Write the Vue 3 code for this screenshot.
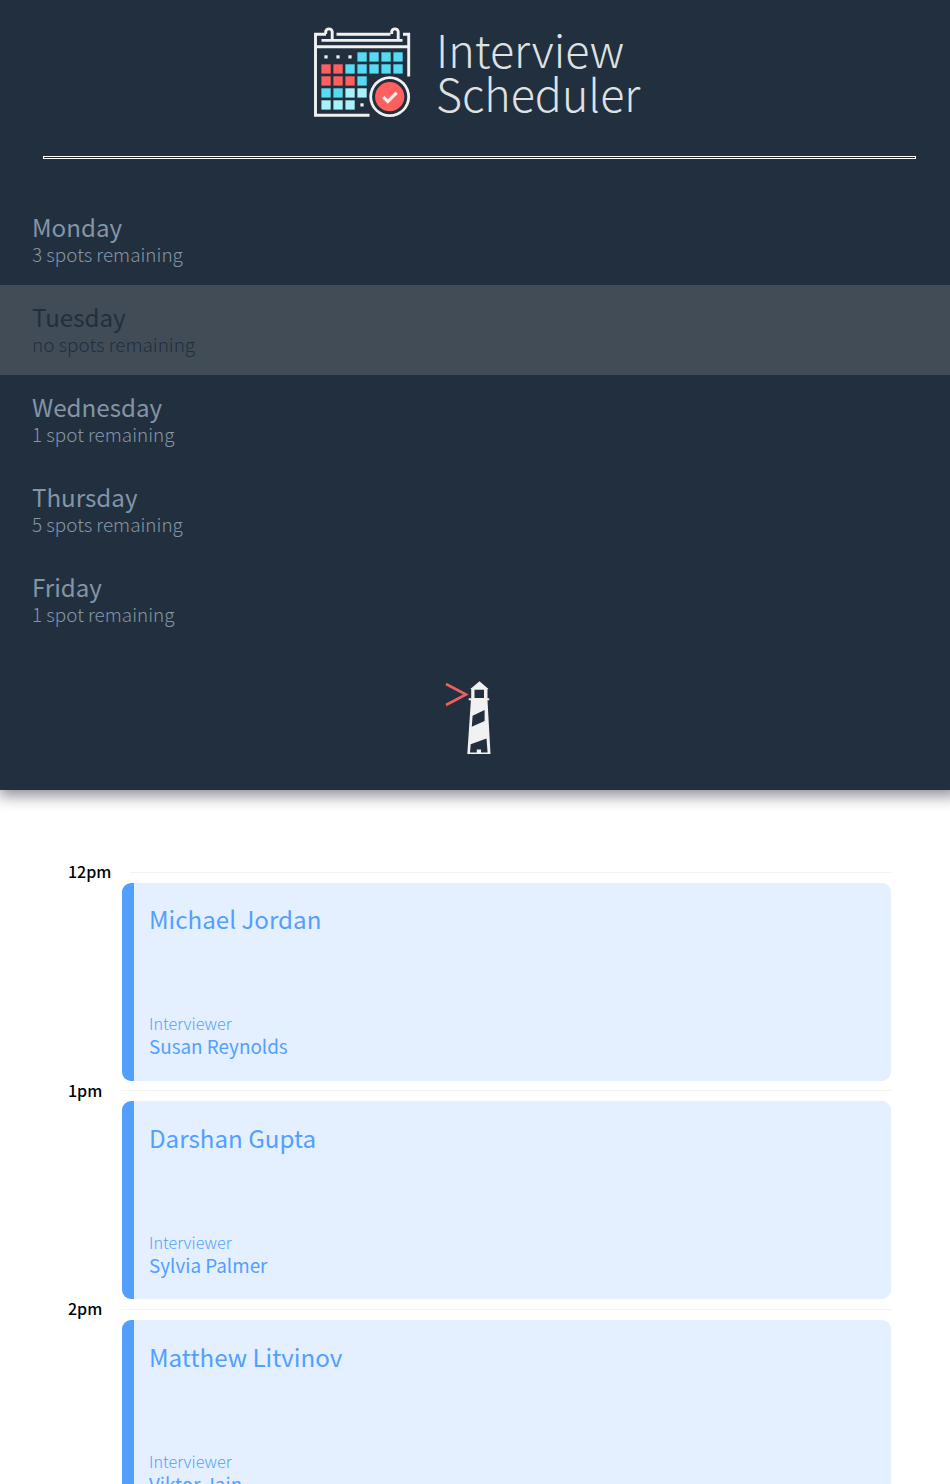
<script setup>
const days = [
  { name: 'Monday', spots: '3 spots remaining' },
  { name: 'Tuesday', spots: 'no spots remaining', full: true },
  { name: 'Wednesday', spots: '1 spot remaining' },
  { name: 'Thursday', spots: '5 spots remaining' },
  { name: 'Friday', spots: '1 spot remaining' }
]
const appointments = [
  { time: '12pm', student: 'Michael Jordan', interviewer: 'Susan Reynolds' },
  { time: '1pm', student: 'Darshan Gupta', interviewer: 'Sylvia Palmer' },
  { time: '2pm', student: 'Matthew Litvinov', interviewer: 'Viktor Jain' }
]
const rows = [
  '...bbbb',
  'rrbbbbb',
  'rrrb',
  'bbll',
  'lll.'
]
const colors = { b: '#57dbf2', r: '#ff5f5f', l: '#a9f1fa' }
const cells = rows.flatMap((row, y) =>
  [...row].map((kind, x) => ({ kind, x: 21.4 + x * 12, y: 37.3 + y * 12 }))
)
</script>

<template>
  <main class="layout">
    <section class="sidebar">
      <header class="brand">
        <svg class="calendar" width="98" height="92" viewBox="13 12 98 92">
          <g fill="none" stroke="#f1f1f1" stroke-width="2.9">
            <path d="M26 19.3H15.5V100.3H69.5" />
            <path d="M36.5 19.3H90.5" />
            <path d="M103 19.3H108.7V61.5" />
            <path d="M15.5 31.7H108.7" />
            <path d="M21.5 25.4H102.5" />
            <path d="M32.2 25V16.6A3.3 3.3 0 0 0 25.7 16.6V19" />
            <path d="M98.2 25V16.6A3.3 3.3 0 0 0 91.7 16.6V19" />
          </g>
          <template v-for="(cell, i) in cells" :key="i">
            <rect v-if="cell.kind === '.'" :x="cell.x + 3" :y="cell.y + 3" width="3.2" height="3.2" fill="#f1f1f1" />
            <rect v-else :x="cell.x" :y="cell.y" width="9.3" height="9.3" :fill="colors[cell.kind]" />
          </template>
          <circle cx="89.7" cy="81.7" r="20.4" fill="#f1f1f1" />
          <circle cx="89.7" cy="81.7" r="17.6" fill="#222f3e" />
          <circle cx="89.7" cy="81.7" r="14.6" fill="#ff5f5f" />
          <path d="M83.2 81.9L87.8 86.6L96.7 77.7" fill="none" stroke="#f5eeee" stroke-width="3.1" />
        </svg>
        <h1 class="title"><span>Interview</span><span>Scheduler</span></h1>
      </header>
      <hr class="separator">
      <nav>
        <ul class="days">
          <li v-for="day in days" :key="day.name" class="day" :class="{ full: day.full }">
            <h2>{{ day.name }}</h2>
            <h3>{{ day.spots }}</h3>
          </li>
        </ul>
      </nav>
      <svg class="lighthouse" width="48" height="76" viewBox="15 11 48 76">
        <path d="M16 14L36 24.5L16 35" fill="none" stroke="#ef5f5f" stroke-width="2.6" />
        <path d="M49.5 11.3L58.5 18.9H40.3Z" fill="#f1f1f1" />
        <path fill-rule="evenodd" d="M41.2 18H57.5V28.3H59.2V30.3H57.5L60.5 84H37.3L40.9 30.3H38.7V28.3H41.2ZM44.5 19.8V27.9H54V19.8Z" fill="#f1f1f1" />
        <path d="M42.6 45.8L54.6 40V51L41.8 56.8ZM40.7 74.3L56.5 68.4L57.6 82.6H51V79.4H46.8V82.6H40Z" fill="#222f3e" />
      </svg>
    </section>
    <section class="schedule">
      <article v-for="item in appointments" :key="item.time" class="appointment">
        <header class="time"><h4>{{ item.time }}</h4><i /></header>
        <div class="card">
          <h2>{{ item.student }}</h2>
          <div class="interviewer">
            <h5>Interviewer</h5>
            <h3>{{ item.interviewer }}</h3>
          </div>
        </div>
      </article>
    </section>
  </main>
</template>

<style>
body { background: #fff; }
</style>

<style scoped>
.layout {
  height: 1484px;
  overflow: hidden;
  font-family: "Noto Sans CJK JP", "Noto Sans", sans-serif;
}
h1, h2, h3, h4, h5, ul { margin: 0; padding: 0; font-weight: 400; white-space: nowrap; }
.sidebar {
  box-sizing: border-box;
  height: 790px;
  display: flex;
  flex-direction: column;
  background: #222f3e;
  box-shadow: 4px 1px 14px 5px rgba(25, 27, 42, .49);
}
.brand { display: flex; height: 129px; padding: 27px 0 0 313px; box-sizing: border-box; }
.title {
  display: flex;
  flex-direction: column;
  margin-left: 25px;
  font-size: 44.8px;
  font-weight: 200;
  line-height: 43.5px;
  color: #dfe1e3;
}
.separator {
  box-sizing: border-box;
  width: 873px;
  height: 3px;
  margin: 27px 0 0 43px;
  border: 1px solid #fff;
  background: #222;
}
.days { list-style: none; margin-top: 36px; }
.day { box-sizing: border-box; height: 90px; padding: 18px 32px 0; color: #8395a7; }
.day h2 { font-size: 24.15px; line-height: 28px; }
.day h3 { font-size: 18.9px; line-height: 26px; font-weight: 200; }
.day.full { background: #414c57; color: #222f3e; }
.lighthouse { margin: 36px 0 0 445px; }
.schedule { padding: 71.8px 59px 0 68px; }
.appointment { height: 218.6px; }
.time { display: flex; align-items: center; height: 21px; }
.time h4 { margin-bottom: 2.4px; font-size: 16px; line-height: 20px; font-weight: 500; color: #000; }
.time i { height: 1px; flex: 1; margin-left: 18.7px; background: #f2f2f2; }
.card {
  box-sizing: border-box;
  height: 198px;
  margin-left: 54px;
  padding: 19.6px 15px 0;
  border-left: 12px solid #539fff;
  border-radius: 9px;
  background: #e4f0ff;
  color: #539fff;
}
.card h2 { font-size: 24.15px; line-height: 34px; }
.interviewer { margin-top: 76px; }
.card h5 { font-size: 16.2px; line-height: 23px; font-weight: 200; }
.card h3 { font-size: 18.85px; line-height: 22px; }
</style>
